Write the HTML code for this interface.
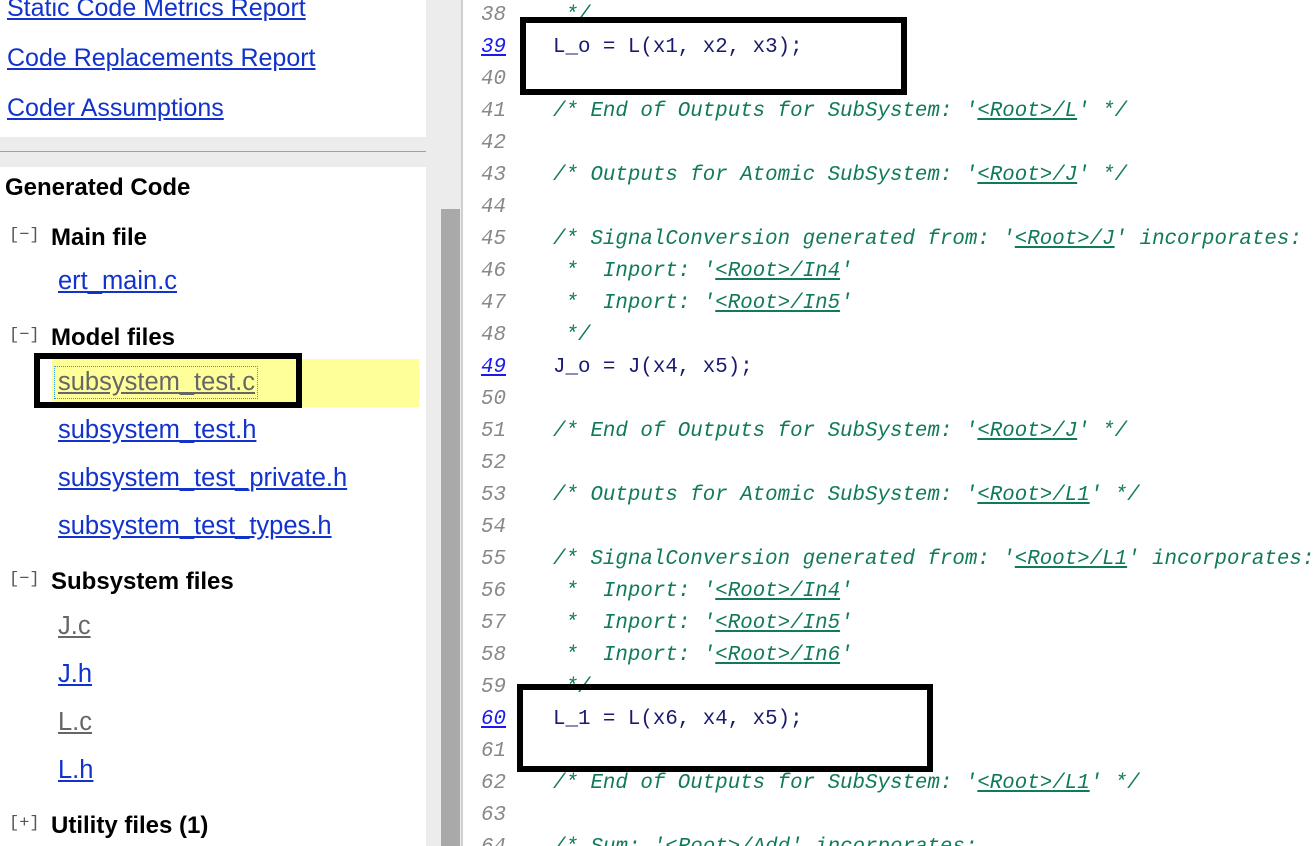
<!DOCTYPE html>
<html><head><meta charset="utf-8"><style>
*{margin:0;padding:0;box-sizing:border-box}
body{width:1313px;height:846px;overflow:hidden;background:#fff;position:relative;font-family:"Liberation Sans",sans-serif}
.l{position:absolute;white-space:nowrap}
a{color:#1133cc;text-decoration:underline}
.nav{font-size:25px;left:7px;line-height:30px}
.h{font-size:24px;font-weight:bold;color:#000;line-height:30px}
.tg{font-family:"Liberation Mono",monospace;font-size:17px;color:#555;left:9px}
.f{font-size:25.5px;left:58px;line-height:30px}
.v{color:#666}
.code{position:absolute;left:463px;top:0;width:850px;height:846px;overflow:hidden}
.r{position:absolute;left:0;height:32px;line-height:32px;white-space:pre;font-family:"Liberation Mono",monospace;font-size:20.8px;width:900px}
.n{position:absolute;left:0;width:43px;text-align:right;font-style:italic;color:#888}
.n a{color:#1a1aee}
.c{position:absolute;left:90px;color:#1a1a6e}
.cm{color:#117a5c;font-style:italic}
.cm a{color:#117a5c}
.box{position:absolute;border:6px solid #000}
</style></head><body>
<div class="l" style="left:0;top:0;width:426px;height:137px;background:#fff"></div>
<div class="l" style="left:0;top:137px;width:426px;height:30px;background:#ececec"></div>
<div class="l" style="left:0;top:151px;width:426px;height:1px;background:#a0a0a0"></div>
<div class="l" style="left:426px;top:0;width:35px;height:846px;background:#ececec"></div>
<div class="l" style="left:441px;top:209px;width:19px;height:637px;background:#a9a9a9"></div>
<div class="l" style="left:461px;top:0;width:2px;height:846px;background:#cfcfcf"></div>

<div class="l nav" style="top:-7px"><a>Static Code Metrics Report</a></div>
<div class="l nav" style="top:43px"><a>Code Replacements Report</a></div>
<div class="l nav" style="top:93px"><a>Coder Assumptions</a></div>
<div class="l h" style="left:5px;top:173px">Generated Code</div>

<div class="l tg" style="top:226px">[−]</div><div class="l h" style="left:51px;top:223px">Main file</div>
<div class="l f" style="top:266px"><a>ert_main.c</a></div>
<div class="l tg" style="top:326px">[−]</div><div class="l h" style="left:51px;top:323px">Model files</div>
<div class="l" style="left:52px;top:359px;width:367px;height:48px;background:#ffff99"></div>
<div class="l" style="left:54px;top:366px;width:204px;height:33px;border:1px dotted #3399dd"></div>
<div class="l f" style="top:367px"><a class="v">subsystem_test.c</a></div>
<div class="l f" style="top:415px"><a>subsystem_test.h</a></div>
<div class="l f" style="top:463px"><a>subsystem_test_private.h</a></div>
<div class="l f" style="top:511px"><a>subsystem_test_types.h</a></div>
<div class="l tg" style="top:570px">[−]</div><div class="l h" style="left:51px;top:567px">Subsystem files</div>
<div class="l f" style="top:611px"><a class="v">J.c</a></div>
<div class="l f" style="top:659px"><a>J.h</a></div>
<div class="l f" style="top:707px"><a class="v">L.c</a></div>
<div class="l f" style="top:755px"><a>L.h</a></div>
<div class="l tg" style="top:814px">[+]</div><div class="l h" style="left:51px;top:811px">Utility files (1)</div>
<div class="box" style="left:34px;top:353px;width:268px;height:55px"></div>

<div class="code">
<div class="r" style="top:0px"><span class="n">38</span><span class="c cm"> */</span></div>
<div class="r" style="top:32px"><span class="n"><a>39</a></span><span class="c">L_o = L(x1, x2, x3);</span></div>
<div class="r" style="top:64px"><span class="n">40</span></div>
<div class="r" style="top:96px"><span class="n">41</span><span class="c cm">/* End of Outputs for SubSystem: '<a>&lt;Root&gt;/L</a>' */</span></div>
<div class="r" style="top:128px"><span class="n">42</span></div>
<div class="r" style="top:160px"><span class="n">43</span><span class="c cm">/* Outputs for Atomic SubSystem: '<a>&lt;Root&gt;/J</a>' */</span></div>
<div class="r" style="top:192px"><span class="n">44</span></div>
<div class="r" style="top:224px"><span class="n">45</span><span class="c cm">/* SignalConversion generated from: '<a>&lt;Root&gt;/J</a>' incorporates:</span></div>
<div class="r" style="top:256px"><span class="n">46</span><span class="c cm"> *  Inport: '<a>&lt;Root&gt;/In4</a>'</span></div>
<div class="r" style="top:288px"><span class="n">47</span><span class="c cm"> *  Inport: '<a>&lt;Root&gt;/In5</a>'</span></div>
<div class="r" style="top:320px"><span class="n">48</span><span class="c cm"> */</span></div>
<div class="r" style="top:352px"><span class="n"><a>49</a></span><span class="c">J_o = J(x4, x5);</span></div>
<div class="r" style="top:384px"><span class="n">50</span></div>
<div class="r" style="top:416px"><span class="n">51</span><span class="c cm">/* End of Outputs for SubSystem: '<a>&lt;Root&gt;/J</a>' */</span></div>
<div class="r" style="top:448px"><span class="n">52</span></div>
<div class="r" style="top:480px"><span class="n">53</span><span class="c cm">/* Outputs for Atomic SubSystem: '<a>&lt;Root&gt;/L1</a>' */</span></div>
<div class="r" style="top:512px"><span class="n">54</span></div>
<div class="r" style="top:544px"><span class="n">55</span><span class="c cm">/* SignalConversion generated from: '<a>&lt;Root&gt;/L1</a>' incorporates:</span></div>
<div class="r" style="top:576px"><span class="n">56</span><span class="c cm"> *  Inport: '<a>&lt;Root&gt;/In4</a>'</span></div>
<div class="r" style="top:608px"><span class="n">57</span><span class="c cm"> *  Inport: '<a>&lt;Root&gt;/In5</a>'</span></div>
<div class="r" style="top:640px"><span class="n">58</span><span class="c cm"> *  Inport: '<a>&lt;Root&gt;/In6</a>'</span></div>
<div class="r" style="top:672px"><span class="n">59</span><span class="c cm"> */</span></div>
<div class="r" style="top:704px"><span class="n"><a>60</a></span><span class="c">L_1 = L(x6, x4, x5);</span></div>
<div class="r" style="top:736px"><span class="n">61</span></div>
<div class="r" style="top:768px"><span class="n">62</span><span class="c cm">/* End of Outputs for SubSystem: '<a>&lt;Root&gt;/L1</a>' */</span></div>
<div class="r" style="top:800px"><span class="n">63</span></div>
<div class="r" style="top:832px"><span class="n">64</span><span class="c cm">/* Sum: '<a>&lt;Root&gt;/Add</a>' incorporates:</span></div>
</div>
<div class="box" style="left:520px;top:17px;width:387px;height:78px"></div>
<div class="box" style="left:517px;top:684px;width:416px;height:88px"></div>
</body></html>
